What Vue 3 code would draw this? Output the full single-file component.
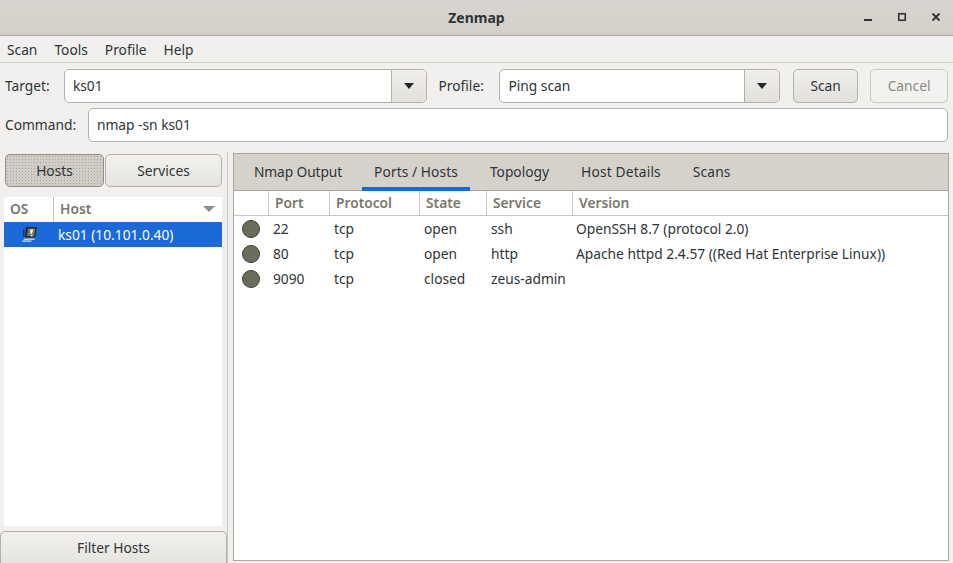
<template>
  <div class="window">
    <header class="titlebar">
      <span class="title">Zenmap</span>
      <div class="controls">
        <svg width="10" height="10" viewBox="0 0 10 10"><rect x="1" y="7" width="8" height="2" fill="#2e3436"/></svg>
        <svg width="10" height="10" viewBox="0 0 10 10"><rect x="1.75" y="1.75" width="6.5" height="6.5" fill="none" stroke="#2e3436" stroke-width="1.6"/></svg>
        <svg width="10" height="10" viewBox="0 0 10 10"><path d="M1.5 1.5l7 7M8.5 1.5l-7 7" stroke="#2e3436" stroke-width="1.8"/></svg>
      </div>
    </header>
    <nav class="menubar">
      <span v-for="m in menus" :key="m">{{ m }}</span>
    </nav>
    <div class="toolbar">
      <div class="row">
        <label class="lbl-target">Target:</label>
        <div class="combo target">
          <span class="field">ks01</span>
          <span class="arrow"><i></i></span>
        </div>
        <label class="lbl-profile">Profile:</label>
        <div class="combo profile">
          <span class="field">Ping scan</span>
          <span class="arrow"><i></i></span>
        </div>
        <button class="btn scan">Scan</button>
        <button class="btn cancel">Cancel</button>
      </div>
      <div class="row second">
        <label class="lbl-command">Command:</label>
        <div class="command">nmap -sn ks01</div>
      </div>
    </div>
    <main class="panes">
      <aside class="left">
        <div class="seg">
          <button class="segbtn active">Hosts</button>
          <button class="segbtn">Services</button>
        </div>
        <div class="hosts">
          <div class="hosthead">
            <span class="h-os">OS</span>
            <span class="h-host">Host<i class="sort"></i></span>
          </div>
          <div class="hostrow">
            <svg class="osicon" width="16" height="17" viewBox="0 0 16 17">
              <path d="M4 1h11l-2 10.5H3z" fill="#262624"/>
              <path d="M6 2.5h7.5l-1.5 7.5H5z" fill="#77776c"/>
              <path d="M8.2 3.5h3l-1.4 4.5H8.6z" fill="#f6f6f0"/>
              <path d="M9 9h1.6l-.3 1.4H8.8z" fill="#f6f6f0"/>
              <path d="M2 12.5h11l-.5 1.5H1.5z" fill="#c9cbc8"/>
              <path d="M.5 14.5h9v1.2h-9z" fill="#e4e6e4"/>
              <path d="M1 3.5h1.6v7.5H1z" fill="#123a78"/>
            </svg>
            <span>ks01 (10.101.0.40)</span>
          </div>
        </div>
        <button class="filter">Filter Hosts</button>
      </aside>
      <section class="notebook">
        <div class="tabs">
          <span v-for="t in tabs" :key="t" class="tab" :class="{ current: t === 'Ports / Hosts' }">{{ t }}</span>
        </div>
        <div class="grid head">
          <span></span><span>Port</span><span>Protocol</span><span>State</span><span>Service</span><span>Version</span>
        </div>
        <div v-for="r in rows" :key="r.port" class="grid line">
          <span class="dotcell"><i class="dot"></i></span>
          <span>{{ r.port }}</span><span>{{ r.proto }}</span><span>{{ r.state }}</span><span>{{ r.service }}</span><span>{{ r.version }}</span>
        </div>
      </section>
    </main>
  </div>
</template>

<script setup>
const menus = ['Scan', 'Tools', 'Profile', 'Help']
const tabs = ['Nmap Output', 'Ports / Hosts', 'Topology', 'Host Details', 'Scans']
const rows = [
  { port: '22', proto: 'tcp', state: 'open', service: 'ssh', version: 'OpenSSH 8.7 (protocol 2.0)' },
  { port: '80', proto: 'tcp', state: 'open', service: 'http', version: 'Apache httpd 2.4.57 ((Red Hat Enterprise Linux))' },
  { port: '9090', proto: 'tcp', state: 'closed', service: 'zeus-admin', version: '' }
]
</script>

<style>
html, body { margin: 0; background: #f1f0ee; overflow: hidden; }
</style>

<style scoped>
.window {
  width: 953px;
  height: 563px;
  display: flex;
  flex-direction: column;
  overflow: hidden;
  background: #f1f0ee;
  color: #2e3436;
  font: 13.75px/18px "Noto Sans", "Open Sans", sans-serif;
}
.titlebar {
  height: 35px;
  flex: none;
  display: flex;
  align-items: center;
  justify-content: center;
  position: relative;
  background-color: #d8d5d0;
  background-image: radial-gradient(circle, #c9c6c0 0.6px, transparent 0.7px), linear-gradient(#d8d5d0, #d3d0ca);
  background-size: 2px 2px, 100% 100%;
  border-bottom: 1px solid #a9a79f;
}
.title { font-weight: 700; font-size: 14px; color: #2e3436; }
.controls {
  position: absolute;
  right: 12px;
  top: 12px;
  display: flex;
  gap: 24px;
}
.controls svg { display: block; }
.menubar {
  height: 27px;
  flex: none;
  display: flex;
  gap: 17px;
  align-items: center;
  padding-left: 7px;
  padding-top: 2px;
  box-sizing: border-box;
  border-bottom: 1px solid #cfcdc8;
}
.toolbar { flex: none; padding: 6px 5px 0 5px; }
.row { display: flex; align-items: center; height: 34px; }
.second { margin-top: 5px; }
.lbl-target { width: 59px; }
.lbl-profile { width: 61px; margin-left: 12px; }
.lbl-command { width: 83px; }
.combo {
  display: flex;
  height: 34px;
  box-sizing: border-box;
  border: 1px solid #b3b1aa;
  border-radius: 5px;
  overflow: hidden;
  background: #fff;
}
.target { width: 363px; }
.profile { width: 281px; }
.field { flex: 1; padding-left: 8px; line-height: 32px; color: #2e3436; }
.arrow {
  width: 34px;
  border-left: 1px solid #b3b1aa;
  background-image: radial-gradient(circle, #cfcdc7 0.6px, transparent 0.7px), linear-gradient(#f0efec, #e2e0dc);
  background-size: 2px 2px, 100% 100%;
  display: flex;
  align-items: center;
  justify-content: center;
}
.arrow i {
  width: 0;
  height: 0;
  border-left: 5.5px solid transparent;
  border-right: 5.5px solid transparent;
  border-top: 6px solid #22262a;
}
.btn {
  height: 34px;
  box-sizing: border-box;
  border: 1px solid #b3b1aa;
  border-radius: 5px;
  font: inherit;
  padding: 0;
}
.scan {
  width: 65px;
  margin-left: 13px;
  background-image: radial-gradient(circle, #cfcdc7 0.6px, transparent 0.7px), linear-gradient(#f0efec, #e2e0dc);
  background-size: 2px 2px, 100% 100%;
  color: #2e3436;
}
.cancel {
  width: 78px;
  margin-left: 12px;
  background: #f3f2f0;
  color: #8a8a80;
  border-color: #c9c7c1;
}
.command {
  flex: 1;
  height: 34px;
  box-sizing: border-box;
  border: 1px solid #b3b1aa;
  border-radius: 5px;
  background: #fff;
  padding-left: 8px;
  line-height: 32px;
}
.panes {
  flex: 1;
  min-height: 0;
  display: flex;
  margin-top: 11px;
}
.left {
  width: 227px;
  flex: none;
  display: flex;
  flex-direction: column;
  box-sizing: border-box;
  padding-left: 4px;
  padding-top: 1px;
}
.seg { display: flex; width: 218px; height: 33px; flex: none; padding-left: 1px; box-sizing: border-box; }
.segbtn {
  font: inherit;
  padding: 0;
  flex: 0 0 99px;
  border: 1px solid #b3b1aa;
  border-radius: 5px;
  background-image: radial-gradient(circle, #d6d4cf 0.6px, transparent 0.7px), linear-gradient(#f2f1ef, #e6e4e1);
  background-size: 2px 2px, 100% 100%;
  color: #2e3436;
}
.segbtn + .segbtn { flex: 0 0 117px; margin-left: 1px; }
.segbtn.active {
  background-color: #d0cdc7;
  background-image: radial-gradient(circle, #a8a69f 0.6px, transparent 0.7px);
  background-size: 3px 3px;
  border-color: #8f8d86;
}
.hosts {
  width: 218px;
  margin-top: 10px;
  flex: 1;
  min-height: 0;
  background: #fff;
}
.hosthead {
  height: 25px;
  display: flex;
  align-items: center;
  color: #77776e;
  font-weight: 600;
}
.h-os { width: 49px; box-sizing: border-box; padding-left: 6px; height: 100%; line-height: 23px; }
.h-host {
  flex: 1;
  position: relative;
  border-left: 1px solid #c4c2bc;
  padding-left: 6px;
  height: 100%;
  line-height: 23px;
}
.sort {
  position: absolute;
  right: 7px;
  top: 9px;
  width: 0;
  height: 0;
  border-left: 6px solid transparent;
  border-right: 6px solid transparent;
  border-top: 6px solid #8e8e85;
}
.hostrow {
  height: 25px;
  display: flex;
  align-items: center;
  background: #1b68d8;
  color: #fff;
}
.osicon { margin-left: 18px; margin-right: 20px; flex: none; }
.filter {
  flex: none;
  height: 32px;
  margin: 5px 0 0 -4px;
  width: 227px;
  box-sizing: border-box;
  border: 1px solid #b3b1aa;
  border-bottom: 0;
  border-radius: 5px 5px 0 0;
  background-image: radial-gradient(circle, #d6d4cf 0.6px, transparent 0.7px), linear-gradient(#f2f1ef, #e6e4e1);
  background-size: 2px 2px, 100% 100%;
  font: inherit;
  color: #2e3436;
  padding: 0;
}
.notebook {
  width: 716px;
  height: 408px;
  margin-left: 6px;
  box-sizing: border-box;
  border: 1px solid #a9a79f;
  background: #fff;
  position: relative;
}
.notebook::before {
  content: "";
  position: absolute;
  left: -7px;
  top: -2px;
  bottom: -10px;
  width: 1px;
  background: #c9c7c1;
}
.tabs {
  height: 36px;
  display: flex;
  padding-left: 8px;
  background: #d5d2cc;
  border-bottom: 1px solid #a9a79f;
  box-sizing: content-box;
}
.tab {
  padding: 0 12px;
  line-height: 35px;
  margin-right: 8px;
  color: #2e3436;
  height: 36px;
  box-sizing: border-box;
}
.tab:nth-child(1) { letter-spacing: -0.1px; }
.tab:nth-child(2) { letter-spacing: 0.08px; }
.tab:nth-child(4) { letter-spacing: 0.17px; }
.tab:nth-child(5) { letter-spacing: 0.15px; }
.tab.current { box-shadow: inset 0 -4px 0 #1b68d8; margin-bottom: -1px; height: 37px; }
.grid {
  display: grid;
  grid-template-columns: 34px 61px 90px 67px 86px 1fr;
  align-items: center;
}
.head {
  height: 24px;
  color: #77776e;
  font-weight: 600;
  border-bottom: 1px solid #c9c7c1;
  line-height: 24px;
}
.head span { padding-left: 6px; height: 24px; box-sizing: border-box; }
.head span + span { border-left: 1px solid #c9c7c1; }
.line { height: 25px; color: #2e3436; }
.line span { padding-left: 5px; white-space: nowrap; }
.line span:first-child { padding: 0; }
.line span:last-child { padding-left: 4px; }
.dotcell { display: flex; align-items: center; justify-content: center; }
.dot {
  width: 18px;
  height: 18px;
  box-sizing: border-box;
  border-radius: 50%;
  background: #6d6d5d;
  border: 1px solid #3e3e34;
}
</style>
